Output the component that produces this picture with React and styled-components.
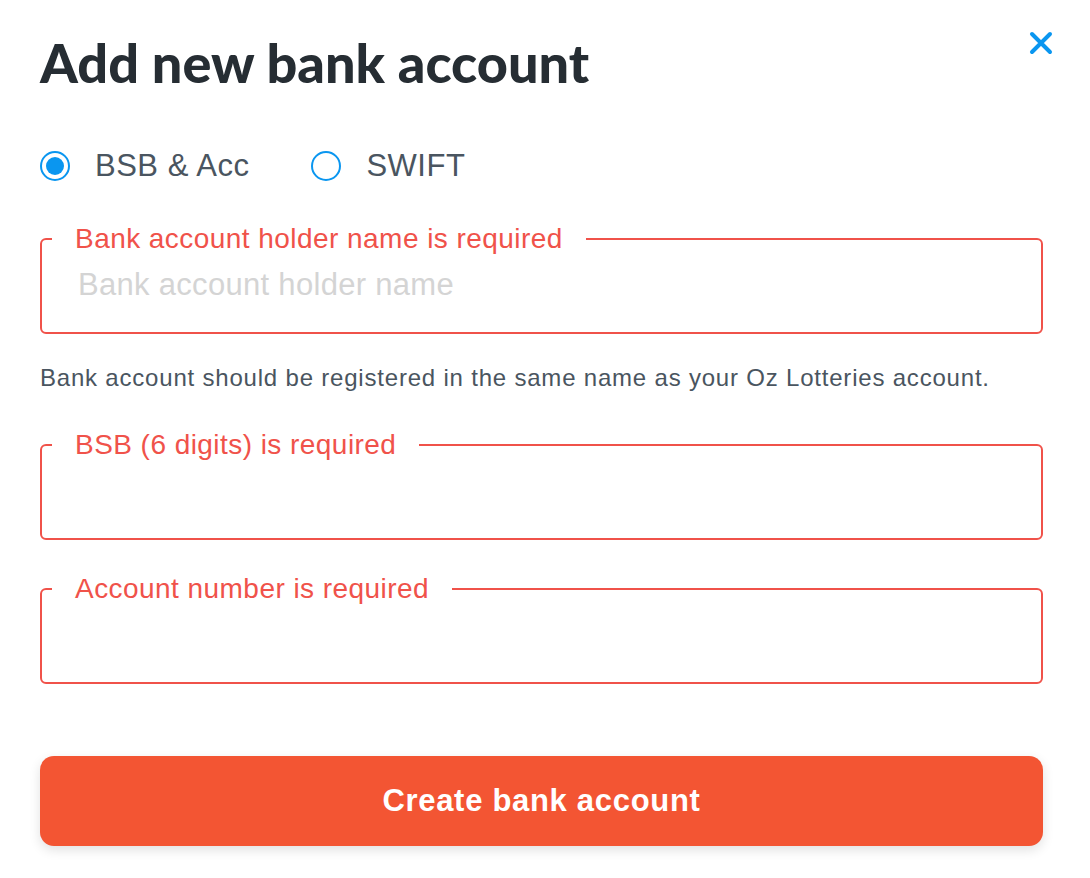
import { createGlobalStyle, styled } from "styled-components";

const GlobalStyle = createGlobalStyle`
    html, body {
        margin: 0;
        padding: 0;
        background: #ffffff;
    }
    * {
        box-sizing: border-box;
    }
`;

const fields = [
    { label: "Bank account holder name is required", placeholder: "Bank account holder name" },
    { label: "BSB (6 digits) is required", placeholder: "" },
    { label: "Account number is required", placeholder: "" },
];

export default function App(){

    return (
        <>
            <GlobalStyle/>
            <Wrapper>
                <Header>
                    <Title>Add new bank account</Title>
                    <Close aria-label="close">
                        <svg width="26" height="26" viewBox="0 0 26 26">
                            <path d="M4 4L22 22M22 4L4 22" stroke="#0a96f0" strokeWidth="4" strokeLinecap="round"/>
                        </svg>
                    </Close>
                </Header>
                <Radios>
                    <RadioLabel>
                        <Radio $checked/>
                        BSB &amp; Acc
                    </RadioLabel>
                    <RadioLabel>
                        <Radio/>
                        SWIFT
                    </RadioLabel>
                </Radios>

                <Field $gap={38}>
                    <Legend>{fields[0].label}</Legend>
                    <Input placeholder={fields[0].placeholder}/>
                </Field>
                <Helper>
                    Bank account should be registered in the same name as your Oz Lotteries account.
                </Helper>
                <Field $gap={37}>
                    <Legend>{fields[1].label}</Legend>
                    <Input/>
                </Field>
                <Field $gap={34}>
                    <Legend>{fields[2].label}</Legend>
                    <Input/>
                </Field>

                <Submit>Create bank account</Submit>
            </Wrapper>
        </>
    );
}

const Wrapper = styled.div`
    width: 1090px;
    padding: 33px 47px 30px 40px;
    font-family: "Liberation Sans", Arial, sans-serif;
`;

const Header = styled.div`
    display: flex;
    justify-content: space-between;
    align-items: flex-start;
`;

const Title = styled.h1`
    margin: 0;
    font-family: Lato, "Noto Sans", sans-serif;
    font-weight: 900;
    font-size: 54px;
    line-height: 60px;
    color: #262d33;
`;

const Close = styled.button`
    border: none;
    background: none;
    padding: 0;
    margin: -3px -11px 0 0;
    cursor: pointer;
    display: flex;
`;

const Radios = styled.div`
    display: flex;
    gap: 62px;
    margin-top: 53px;
    height: 40px;
    align-items: center;
`;

const RadioLabel = styled.label`
    display: flex;
    align-items: center;
    gap: 25px;
    font-size: 31px;
    letter-spacing: 0.5px;
    color: #4a5560;
`;

const Radio = styled.span`
    width: 30px;
    height: 30px;
    border-radius: 50%;
    border: 2px solid #0a96f0;
    display: flex;
    align-items: center;
    justify-content: center;

    &::after {
        content: "";
        width: 18px;
        height: 18px;
        border-radius: 50%;
        background: ${p => p.$checked ? "#0a96f0" : "transparent"};
    }
`;

const Field = styled.fieldset`
    margin: ${p => p.$gap}px 0 0 0;
    padding: 0 10px 16px 10px;
    border: 2px solid #f0524a;
    border-radius: 6px;
`;

const Legend = styled.legend`
    padding: 0 23px;
    font-size: 28px;
    line-height: 30px;
    letter-spacing: 0.45px;
    color: #f0524a;
`;

const Input = styled.input`
    width: 100%;
    height: 62px;
    border: none;
    outline: none;
    padding: 0 26px;
    font-family: "Liberation Sans", Arial, sans-serif;
    font-size: 31px;
    letter-spacing: 0.3px;
    color: #262d33;
    background: transparent;

    &::placeholder {
        color: #d4d4d4;
    }
`;

const Helper = styled.p`
    margin: 29px 0 0 0;
    font-size: 24px;
    line-height: 30px;
    letter-spacing: 0.8px;
    color: #4a5560;
`;

const Submit = styled.button`
    display: block;
    width: 100%;
    height: 90px;
    margin-top: 72px;
    border: none;
    border-radius: 14px;
    background: #f35533;
    color: #ffffff;
    font-family: "Liberation Sans", Arial, sans-serif;
    font-weight: 700;
    font-size: 31px;
    letter-spacing: 0.7px;
    box-shadow: 0 4px 12px rgba(0, 0, 0, 0.12);
    cursor: pointer;
`;
